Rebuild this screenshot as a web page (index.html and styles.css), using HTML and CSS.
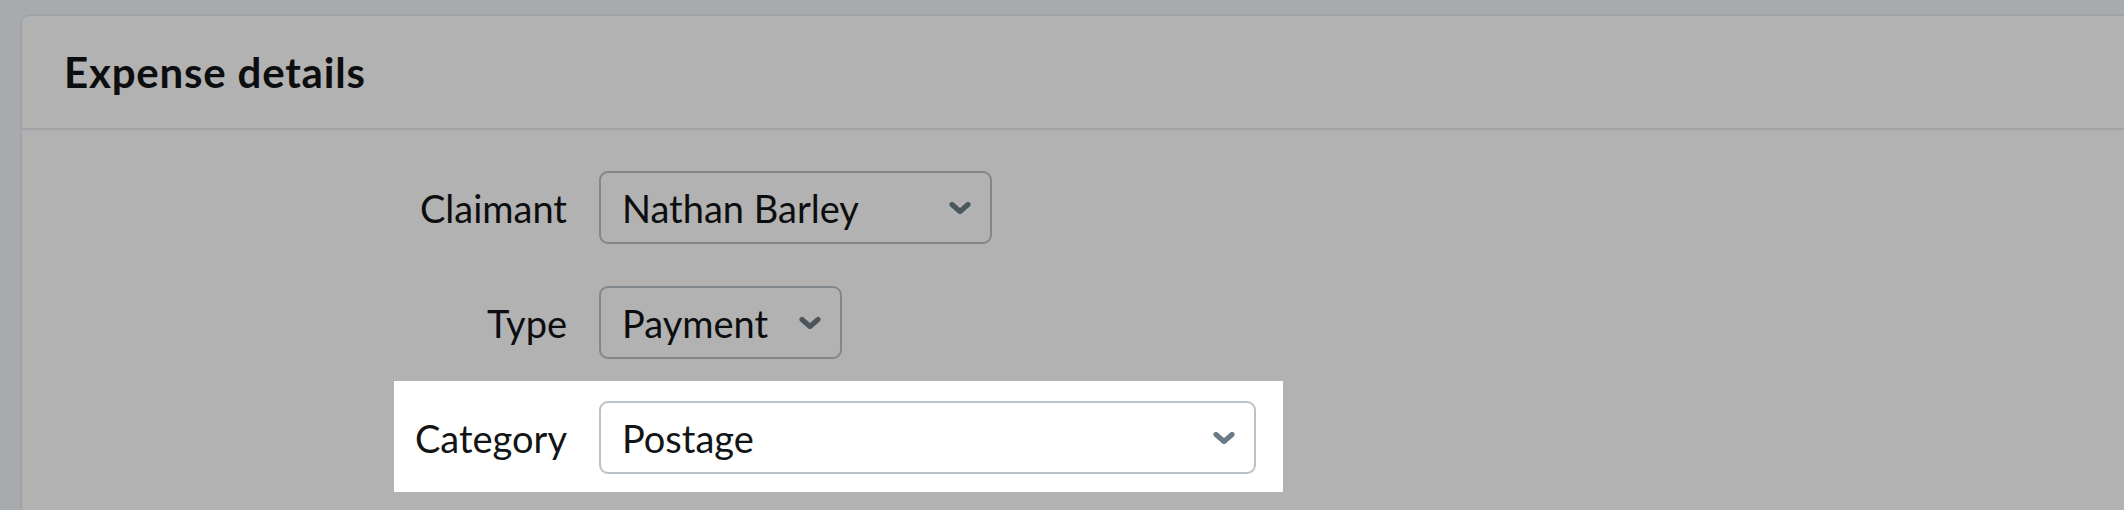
FILE: index.html
```html
<!DOCTYPE html>
<html lang="en">
<head>
<meta charset="utf-8">
<title>Expense details</title>
<link rel="stylesheet" href="styles.css">
</head>
<body>
<div class="page">
  <section class="card">
    <header class="card-header">
      <h2 class="card-title">Expense details</h2>
    </header>
    <div class="form">
      <div class="row">
        <span class="label">Claimant</span>
        <div class="select select-claimant">
          <span class="value">Nathan Barley</span>
          <svg class="chevron" viewBox="0 0 22 14" width="22" height="14"><path d="M3 3.5 L11 10.5 L19 3.5" fill="none" stroke="currentColor" stroke-width="5" stroke-linecap="round" stroke-linejoin="round"/></svg>
        </div>
      </div>
      <div class="row">
        <span class="label">Type</span>
        <div class="select select-type">
          <span class="value">Payment</span>
          <svg class="chevron" viewBox="0 0 22 14" width="22" height="14"><path d="M3 3.5 L11 10.5 L19 3.5" fill="none" stroke="currentColor" stroke-width="5" stroke-linecap="round" stroke-linejoin="round"/></svg>
        </div>
      </div>
      <div class="row row-spotlight">
        <span class="label">Category</span>
        <div class="select select-category">
          <span class="value">Postage</span>
          <svg class="chevron" viewBox="0 0 22 14" width="22" height="14"><path d="M3 3.5 L11 10.5 L19 3.5" fill="none" stroke="currentColor" stroke-width="5" stroke-linecap="round" stroke-linejoin="round"/></svg>
        </div>
      </div>
    </div>
  </section>
</div>
<div class="overlay"></div>
</body>
</html>
```
FILE: styles.css
```css
html, body {
  margin: 0;
  padding: 0;
  height: 100%;
  overflow: hidden;
}
body {
  background: #f1f5fa;
  font-family: Lato, "Liberation Sans", Arial, sans-serif;
  color: #121416;
}
.page {
  box-sizing: border-box;
  height: 100%;
  padding: 16px 0 0 22px;
}
.card {
  box-sizing: border-box;
  height: 100%;
  background: #ffffff;
  border-radius: 8px 0 0 0;
  box-shadow: 0 0 3px rgba(20, 30, 40, 0.18);
}
.card-header {
  height: 112px;
  padding: 0 42px;
  display: flex;
  align-items: center;
  border-bottom: 2px solid #e9e8f0;
}
.card-title {
  margin: 0;
  font-size: 42px;
  font-weight: 700;
  color: #121416;
  letter-spacing: 0.8px;
}
.form {
  padding: 21px 0 0 372px;
  display: flex;
  flex-direction: column;
  gap: 4px;
  align-items: flex-start;
}
.row {
  display: flex;
  align-items: center;
  gap: 32px;
  padding: 20px 27px 18px 0;
}
.label {
  width: 173px;
  text-align: right;
  font-size: 38px;
  color: #121416;
}
.select {
  box-sizing: border-box;
  height: 73px;
  border: 2px solid #b9c2c7;
  border-radius: 9px;
  background: #ffffff;
  display: flex;
  align-items: center;
  justify-content: space-between;
  padding: 0 19px 0 21px;
  font-size: 38px;
  color: #121416;
}
.select-claimant { width: 393px; }
.select-type { width: 243px; }
.select-category { width: 657px; }
.chevron {
  color: #6b7a84;
  flex: none;
}
.row-spotlight {
  position: relative;
  z-index: 20;
  background: #ffffff;
}
.overlay {
  position: fixed;
  inset: 0;
  background: rgba(0, 0, 0, 0.3);
  z-index: 10;
}
```
